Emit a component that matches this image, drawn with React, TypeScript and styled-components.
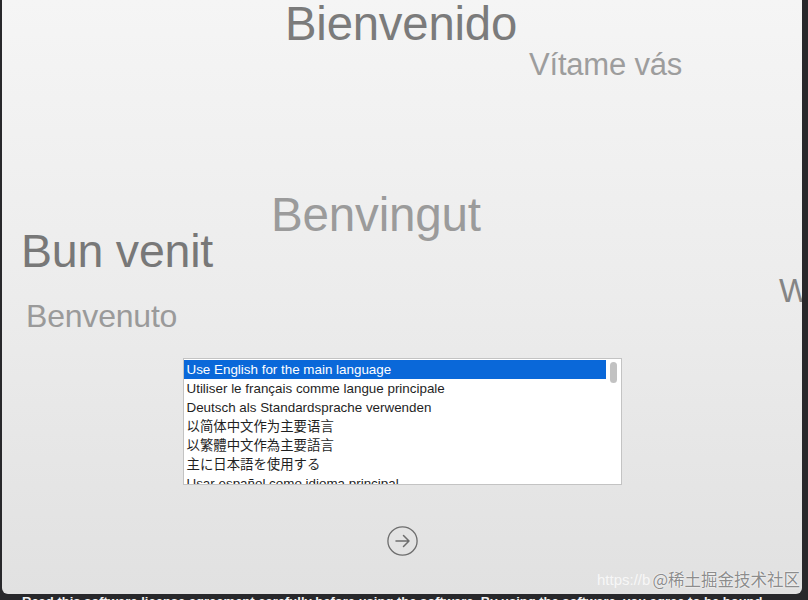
import styled, { createGlobalStyle } from 'styled-components';

const GlobalStyle = createGlobalStyle`
  html, body {
    margin: 0;
    padding: 0;
    background: #28282b;
    overflow: hidden;
  }
  body {
    font-family: "Liberation Sans", Arial, sans-serif;
  }
`;

const Pantalla = styled.div`
  position: relative;
  width: 808px;
  height: 600px;
  display: flex;
  flex-direction: column;
  overflow: hidden;
  background: #28282b;
`;

const Ventana = styled.div`
  margin-left: 2px;
  width: 800px;
  height: 594px;
  flex: none;
  display: flex;
  flex-direction: column;
  align-items: center;
  overflow: hidden;
  border-radius: 0 0 6px 6px;
  background: linear-gradient(180deg, #f5f5f5 0%, #ececec 50%, #e1e1e1 100%);
`;

// los saludos flotan libres en el lienzo
const Lienzo = styled.div`
  position: relative;
  align-self: stretch;
  height: 358px;
  flex: none;
`;

const Saludo = styled.span<{ $size: number; $color: string; $x: number; $y: number }>`
  position: absolute;
  left: ${({ $x }) => $x}px;
  top: ${({ $y }) => $y}px;
  font-size: ${({ $size }) => $size}px;
  line-height: 1.1;
  color: ${({ $color }) => $color};
  white-space: nowrap;
  letter-spacing: -0.2px;
`;

const Lista = styled.div`
  width: 437px;
  height: 125px;
  flex: none;
  display: flex;
  border: 1px solid #c3c3c3;
  background: #ffffff;
`;

const Filas = styled.div`
  flex: 1;
  overflow: hidden;
  padding-top: 1px;
`;

const Fila = styled.div<{ $activa?: boolean; $lang?: string }>`
  height: 19px;
  line-height: 19px;
  padding-left: 3px;
  font-size: 13.4px;
  white-space: nowrap;
  color: ${({ $activa }) => ($activa ? '#ffffff' : '#1f1f1f')};
  background: ${({ $activa }) => ($activa ? '#0a68d9' : 'transparent')};
  font-family: ${({ $lang }) =>
    $lang === 'tc'
      ? '"Liberation Sans", "Noto Sans CJK TC", sans-serif'
      : $lang === 'jp'
      ? '"Liberation Sans", "Noto Sans CJK JP", sans-serif'
      : '"Liberation Sans", "Noto Sans CJK SC", sans-serif'};
`;

const Barra = styled.div`
  width: 15px;
  flex: none;
  display: flex;
  justify-content: center;
  padding-top: 3px;
`;

const Pulgar = styled.div`
  width: 7px;
  height: 21px;
  border-radius: 4px;
  background: #c2c2c2;
`;

const Siguiente = styled.button`
  margin-top: 41px;
  width: 31px;
  height: 30px;
  padding: 0;
  border: none;
  background: transparent;
  display: flex;
  align-items: center;
  justify-content: center;
  cursor: pointer;
`;

const Pie = styled.div`
  flex: 1;
  padding-left: 22px;
  font-size: 13px;
  line-height: 15.6px;
  font-weight: bold;
  color: #f2f2f2;
  white-space: nowrap;
  overflow: hidden;
`;

const MarcaAgua = styled.div`
  position: absolute;
  right: 8px;
  top: 568px;
  display: flex;
  align-items: flex-end;
  white-space: nowrap;
  pointer-events: none;
`;

const Url = styled.span`
  font-size: 15px;
  color: rgba(255, 255, 255, 0.75);
  margin-right: 2px;
  margin-bottom: 2px;
`;

const Firma = styled.span`
  font-family: "Noto Sans CJK SC", "Liberation Sans", sans-serif;
  font-size: 16.5px;
  line-height: 22px;
  color: #8c8c8c;
  text-shadow: 0 0 2px #ffffff, 0 0 1px #ffffff;
`;

const saludos = [
  { texto: 'Bienvenido', size: 47.3, color: '#7b7b7b', x: 283, y: -2 },
  { texto: 'Vítame vás', size: 31, color: '#9d9d9d', x: 527, y: 48 },
  { texto: 'Benvingut', size: 47.6, color: '#9b9b9b', x: 269, y: 189 },
  { texto: 'Bun venit', size: 46.5, color: '#787878', x: 19, y: 226 },
  { texto: 'Benvenuto', size: 32, color: '#9a9a9a', x: 24, y: 299 },
  { texto: 'W', size: 33, color: '#858585', x: 777, y: 273 },
];

const idiomas = [
  { texto: 'Use English for the main language' },
  { texto: 'Utiliser le français comme langue principale' },
  { texto: 'Deutsch als Standardsprache verwenden' },
  { texto: '以简体中文作为主要语言', lang: 'sc' },
  { texto: '以繁體中文作為主要語言', lang: 'tc' },
  { texto: '主に日本語を使用する', lang: 'jp' },
  { texto: 'Usar español como idioma principal' },
  { texto: 'Usa l’italiano come lingua principale' },
  { texto: '주 언어로 한국어 사용' },
];

const Flecha = () => (
  <svg width="31" height="30" viewBox="0 0 31 30" fill="none">
    <ellipse cx="15.5" cy="15" rx="14.6" ry="14.2" stroke="#6d6d6d" strokeWidth="1.3" />
    <path d="M9 15h13M16.5 9.5L22 15l-5.5 5.5" stroke="#6d6d6d" strokeWidth="1.5" strokeLinecap="round" strokeLinejoin="round" />
  </svg>
);

export default function App() {
  return (
    <Pantalla>
      <GlobalStyle />
      <Ventana>
        <Lienzo>
          {saludos.map((s) => (
            <Saludo key={s.texto} $size={s.size} $color={s.color} $x={s.x} $y={s.y}>
              {s.texto}
            </Saludo>
          ))}
        </Lienzo>

        <Lista>
          <Filas>
            {idiomas.map((i, n) => (
              <Fila key={i.texto} $activa={n === 0} $lang={i.lang}>
                {i.texto}
              </Fila>
            ))}
          </Filas>
          <Barra>
            <Pulgar />
          </Barra>
        </Lista>

        <Siguiente aria-label="Continuar">
          <Flecha />
        </Siguiente>
      </Ventana>

      <Pie>Read this software license agreement carefully before using the software. By using the software, you agree to be bound</Pie>

      <MarcaAgua>
        <Url>https://b</Url>
        <Firma>@稀土掘金技术社区</Firma>
      </MarcaAgua>
    </Pantalla>
  );
}
